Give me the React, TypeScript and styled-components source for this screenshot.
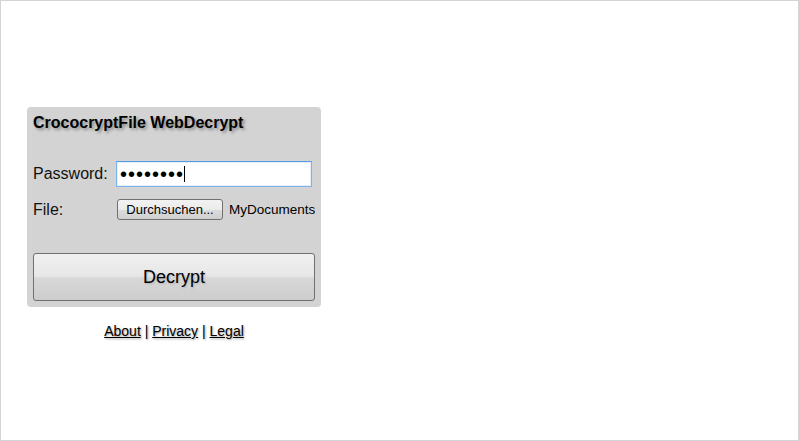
import { createGlobalStyle } from "styled-components";
import styled from "styled-components";

const GlobalStyle = createGlobalStyle`
  html, body {
    margin: 0;
    padding: 0;
    background: #ffffff;
  }
  body {
    font-family: "Liberation Sans", Arial, sans-serif;
    color: #000;
  }
`;

const App = () => {
  return (
    <>
      <GlobalStyle />
      <Page>
        <Wrapper>
          <Panel>
            <Title>CrococryptFile WebDecrypt</Title>
            <Form>
              <Label>Password:</Label>
              <InputBox>
                <PasswordInput type="password" defaultValue="12345678" />
                <Caret />
              </InputBox>
              <Label>File:</Label>
              <FileCell>
                <BrowseButton type="button">Durchsuchen...</BrowseButton>
                <FileName>MyDocuments</FileName>
              </FileCell>
            </Form>
            <DecryptButton type="button">Decrypt</DecryptButton>
          </Panel>
          <Links>
            <a href="#">About</a> | <a href="#">Privacy</a> |{" "}
            <a href="#">Legal</a>
          </Links>
        </Wrapper>
      </Page>
    </>
  );
};

export default App;

const Page = styled.div`
  box-sizing: border-box;
  width: 799px;
  height: 441px;
  border: 1px solid #d4d4d4;
  padding: 106px 0 0 26px;
`;

const Wrapper = styled.div`
  width: 294px;
  display: flex;
  flex-direction: column;
`;

const Panel = styled.div`
  box-sizing: border-box;
  width: 294px;
  height: 200px;
  background: #d3d3d3;
  border-radius: 4px;
  padding: 6px;
  display: flex;
  flex-direction: column;
`;

const Title = styled.h1`
  margin: 0;
  font-size: 16px;
  line-height: 20px;
  font-weight: bold;
  text-shadow: 2px 2px 3px #8a8a8a;
`;

const Form = styled.div`
  display: grid;
  grid-template-columns: 83px 1fr;
  grid-template-rows: 26px 21px;
  row-gap: 12px;
  align-items: center;
  margin-top: 28px;
`;

const Label = styled.span`
  font-size: 16px;
  line-height: 20px;
  color: #111;
`;

const InputBox = styled.div`
  position: relative;
  width: 196px;
  height: 26px;
`;

const PasswordInput = styled.input`
  box-sizing: border-box;
  width: 196px;
  height: 26px;
  margin: 0;
  padding: 2px 3px;
  border: 1px solid #7eb4ea;
  border-top-color: #569de5;
  background: #fff;
  font-family: "Liberation Sans", Arial, sans-serif;
  font-size: 20px;
  color: #000;
  outline: none;
  box-shadow: inset 0 0 0 1px #e3eefa;
  letter-spacing: 1px;
`;

const Caret = styled.span`
  position: absolute;
  left: 68px;
  top: 5px;
  width: 1px;
  height: 16px;
  background: #000;
`;

const FileCell = styled.div`
  display: flex;
  align-items: center;
  gap: 6px;
  padding-left: 1px;
`;

const BrowseButton = styled.button`
  box-sizing: border-box;
  width: 106px;
  height: 21px;
  margin: 0;
  padding: 0 4px;
  border: 1px solid #707070;
  border-radius: 3px;
  background: linear-gradient(#f2f2f2 0%, #ebebeb 50%, #dddddd 51%, #cfcfcf 100%);
  font-family: "Liberation Sans", Arial, sans-serif;
  font-size: 13px;
  color: #000;
  white-space: nowrap;
  overflow: hidden;
`;

const FileName = styled.span`
  font-size: 13.5px;
  line-height: 16px;
`;

const DecryptButton = styled.button`
  box-sizing: border-box;
  width: 282px;
  height: 48px;
  margin: 33px 0 0 0;
  border: 1px solid #707070;
  border-radius: 3px;
  background: linear-gradient(
    #f0f0f0 0%,
    #e7e7e7 48%,
    #d8d8d8 52%,
    #cdcdcd 100%
  );
  font-family: "Liberation Sans", Arial, sans-serif;
  font-size: 18px;
  color: #000;
  text-shadow: 1px 1px 2px #b0b0b0;
`;

const Links = styled.div`
  margin-top: 16px;
  text-align: center;
  font-size: 14px;
  line-height: 17px;
  color: #000;
  text-shadow: 1px 1px 2px #999;

  a {
    color: #000;
    text-decoration: underline;
  }
`;
